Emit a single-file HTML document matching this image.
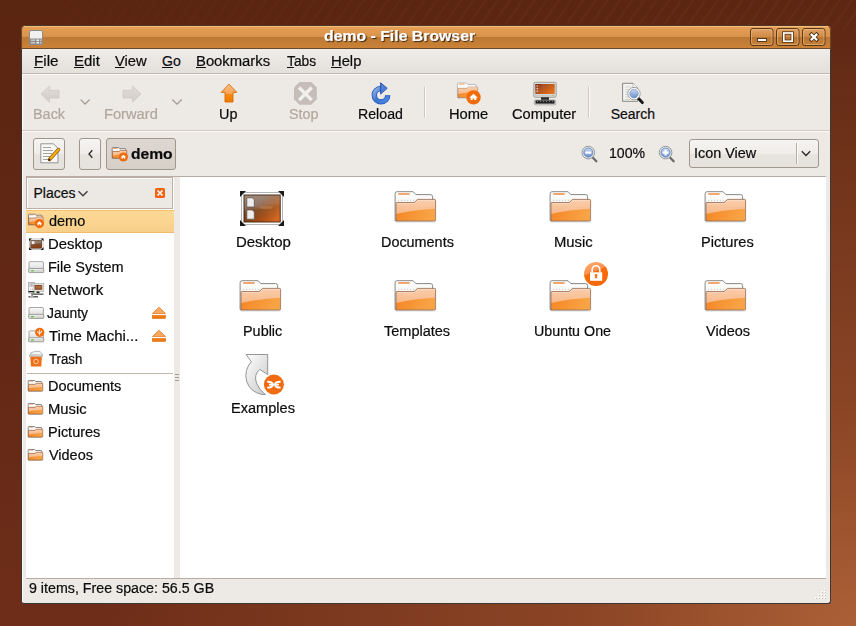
<!DOCTYPE html>
<html><head><meta charset="utf-8"><title>demo - File Browser</title>
<style>
*{margin:0;padding:0;box-sizing:border-box}
html,body{width:856px;height:626px;overflow:hidden}
body{position:relative;font-family:"Liberation Sans",sans-serif;font-size:14px;color:#101010;
background:radial-gradient(ellipse 760px 640px at 100% 100%,rgba(172,96,54,1) 0%,rgba(150,78,42,.75) 35%,rgba(120,58,28,0) 100%),linear-gradient(180deg,#5a2511 0%,#622815 50%,#6e2d19 100%);}
.a{position:absolute}
.t{position:absolute;white-space:nowrap;line-height:14px;font-size:14px;transform-origin:0 0;color:#0c0c0c;-webkit-text-stroke:0.2px currentColor}
.dis{color:#b0a69c}
.bold{font-weight:bold}
.ttl{font-weight:bold;color:#fff;text-shadow:1px 1px 1px #3a2410}
.u{text-decoration:underline;text-underline-offset:1px}
#stripes{position:absolute;left:0;top:0;width:856px;height:40px;
background:repeating-linear-gradient(125deg,rgba(255,150,70,0) 0px,rgba(255,150,70,0) 6px,rgba(255,150,70,.06) 8px,rgba(255,150,70,0) 10px);
-webkit-mask-image:linear-gradient(90deg,rgba(0,0,0,.3) 0%,#000 60%,#000 100%),linear-gradient(180deg,#000 50%,rgba(0,0,0,0) 100%);-webkit-mask-composite:source-in;mask-composite:intersect}
#win{position:absolute;left:21px;top:48px;width:810px;height:556px;background:#edeae6;
border:1px solid #3a3836;border-top:none;border-radius:0 0 3px 3px}
#title{position:absolute;left:21px;top:25px;width:810px;height:24px;
background:linear-gradient(180deg,#4e3626 0px,#4e3626 1px,#f3bd7e 1px,#f3bd7e 2px,#e6a055 2px,#d8924a 12px,#bb7835 12px,#cc8236 23px,#6e4a2c 23px,#6e4a2c 24px);
border-radius:5px 5px 0 0;box-shadow:inset 1px 0 0 #6e4626,inset -1px 0 0 #6e4626}
.btn{position:absolute;border:1px solid #9f968c;border-radius:3px;background:linear-gradient(180deg,#f6f4f2 0%,#efece9 50%,#e7e3de 51%,#e6e2dd 100%)}

</style></head><body>
<div id="stripes"></div>
<div id="win"></div><div id="title"></div>
<div class="a" style="left:22px;top:49px;width:1px;height:553px;background:#fbfaf9"></div>
<div class="a" style="left:22px;top:49px;width:808px;height:24px;background:linear-gradient(180deg,#efedea,#e3dfdb)"></div>
<div class="a" style="left:22px;top:73px;width:808px;height:1px;background:#c3b9b0"></div>
<div class="a" style="left:22px;top:74px;width:808px;height:1px;background:#fbfaf9"></div>
<div class="a" style="left:22px;top:130px;width:808px;height:1px;background:#d2c9c0"></div>
<div class="a" style="left:22px;top:131px;width:808px;height:1px;background:#fbfaf9"></div>
<div class="btn" style="left:33px;top:138px;width:32px;height:32px"></div>
<div class="btn" style="left:79px;top:138px;width:22px;height:32px"></div>
<div class="a" style="left:106px;top:138px;width:70px;height:32px;border:1px solid #9f968c;border-radius:3px;background:linear-gradient(180deg,#ddd7d1,#d6d0c9)"></div>
<div class="btn" style="left:689px;top:139px;width:130px;height:29px"></div>
<div class="a" style="left:26px;top:176px;width:800px;height:1px;background:#b9ada2"></div>
<div class="a" style="left:26px;top:177px;width:148px;height:401px;background:#fff"></div>
<div class="a" style="left:180px;top:177px;width:646px;height:401px;background:#fff"></div>
<div class="a" style="left:26px;top:177px;width:147px;height:32px;background:#ece9e5;border:1px solid #bcb0a6;box-shadow:inset 1px 1px 0 #fcfbfa"></div>
<div class="a" style="left:26px;top:210px;width:148px;height:23px;background:linear-gradient(180deg,#fcd995,#f8cf8a);border-top:1px solid #f3c26e;border-bottom:1px solid #f0bc6c"></div>
<div class="a" style="left:27px;top:373px;width:146px;height:1px;background:#c4b8ac"></div>
<div class="a" style="left:26px;top:578px;width:800px;height:1px;background:#b9ada1"></div>

<svg class="a" style="left:0;top:0" width="856" height="626" viewBox="0 0 856 626"><defs><linearGradient id="gFront" x1="0" y1="0" x2="0" y2="1">
<stop offset="0" stop-color="#fbc69a"/><stop offset="0.45" stop-color="#f8b07a"/><stop offset="0.46" stop-color="#f5953f"/><stop offset="1" stop-color="#f58228"/></linearGradient>
<linearGradient id="gFrontR" x1="0" y1="0" x2="1" y2="0">
<stop offset="0" stop-color="#fff" stop-opacity="0"/><stop offset="1" stop-color="#ffd080" stop-opacity="0.35"/></linearGradient>
<linearGradient id="gBack" x1="0" y1="0" x2="0" y2="1">
<stop offset="0" stop-color="#ffffff"/><stop offset="1" stop-color="#e6e6e2"/></linearGradient>
<linearGradient id="gUp" x1="0" y1="0" x2="0" y2="1">
<stop offset="0" stop-color="#fcc08a"/><stop offset="0.55" stop-color="#f9a050"/><stop offset="0.56" stop-color="#f68a10"/><stop offset="1" stop-color="#f07c00"/></linearGradient>
<linearGradient id="gBlue" x1="0" y1="0" x2="1" y2="1">
<stop offset="0" stop-color="#8fb4ea"/><stop offset="0.5" stop-color="#3d72d0"/><stop offset="1" stop-color="#4a8ae8"/></linearGradient>
<linearGradient id="gScreen" x1="0" y1="0" x2="1" y2="0.6">
<stop offset="0" stop-color="#6e1a08"/><stop offset="0.35" stop-color="#a8502c"/><stop offset="0.7" stop-color="#c86018"/><stop offset="1" stop-color="#e07020"/></linearGradient>
<linearGradient id="gDesk" x1="0.3" y1="0" x2="0.5" y2="1">
<stop offset="0" stop-color="#a08a7c"/><stop offset="0.4" stop-color="#927260"/><stop offset="0.55" stop-color="#7e4c2a"/><stop offset="1" stop-color="#8a3c10"/></linearGradient>
<linearGradient id="gDeskR" x1="0" y1="0.2" x2="1" y2="0.8">
<stop offset="0.35" stop-color="#c86010" stop-opacity="0"/><stop offset="1" stop-color="#f07828" stop-opacity="0.75"/></linearGradient>
<linearGradient id="gGrayArrow" x1="0" y1="0" x2="1" y2="1">
<stop offset="0" stop-color="#ffffff"/><stop offset="1" stop-color="#c8c8c8"/></linearGradient>
<linearGradient id="gDisArrow" x1="0" y1="0" x2="0" y2="1">
<stop offset="0" stop-color="#e2ddd8"/><stop offset="1" stop-color="#d2ccc6"/></linearGradient>
<linearGradient id="gTbtn" x1="0" y1="0" x2="0" y2="1">
<stop offset="0" stop-color="#e2a463"/><stop offset="0.5" stop-color="#d08a45"/><stop offset="0.51" stop-color="#b97634"/><stop offset="1" stop-color="#c88036"/></linearGradient>
<linearGradient id="gDrive" x1="0" y1="0" x2="0" y2="1">
<stop offset="0" stop-color="#fafafa"/><stop offset="1" stop-color="#dcdcdc"/></linearGradient>
<linearGradient id="gEmb" x1="0.1" y1="0.1" x2="0.45" y2="0.95">
<stop offset="0" stop-color="#fba868"/><stop offset="0.42" stop-color="#f99050"/><stop offset="0.43" stop-color="#f86c0a"/><stop offset="1" stop-color="#f56808"/></linearGradient>
<linearGradient id="gZoom" x1="0" y1="0" x2="0" y2="1">
<stop offset="0" stop-color="#c8d8f0"/><stop offset="1" stop-color="#6a90d0"/></linearGradient>
<linearGradient id="gFrontTop" x1="0" y1="0" x2="0" y2="1">
<stop offset="0" stop-color="#fad0b0"/><stop offset="1" stop-color="#f7b888"/></linearGradient>
<linearGradient id="gFrontBot" x1="0" y1="0" x2="1" y2="0.3">
<stop offset="0" stop-color="#f4801e"/><stop offset="1" stop-color="#f8a446"/></linearGradient>
<clipPath id="cFront"><path d="M1.4,12.4 Q1.4,11.4 2.4,11.4 L19.5,11.4 L22.9,8.2 L40,8.2 Q41,8.2 41,9.2 L41,28.8 Q41,29.8 40,29.8 L1.4,29.8 Z"/></clipPath>
<g id="folder">
<path d="M0.5,2.5 Q0.5,0.5 2.5,0.5 L18.5,0.5 L21.2,3.4 L36,3.4 Q38,3.4 38,5.4 L38,29.5 L0.5,29.5 Z" fill="url(#gBack)" stroke="#7d7b78" stroke-width="0.9"/>
<rect x="3.4" y="2" width="11.8" height="1.6" rx="0.8" fill="#f08a40"/>
<g fill="#c4c4bf"><rect x="3.5" y="8.6" width="1" height="1"/><rect x="6.5" y="8.6" width="1" height="1"/><rect x="9.5" y="8.6" width="1" height="1"/><rect x="12.5" y="8.6" width="1" height="1"/><rect x="15.5" y="8.6" width="1" height="1"/><rect x="18.5" y="8.6" width="1" height="1"/></g>
<g clip-path="url(#cFront)">
<rect x="0" y="7" width="42" height="24" fill="url(#gFrontBot)"/>
<path d="M0,7 L42,7 L42,17.6 Q20,18.5 0,23 Z" fill="url(#gFrontTop)"/>
</g>
<path d="M1.4,12.4 Q1.4,11.4 2.4,11.4 L19.5,11.4 L22.9,8.2 L40,8.2 Q41,8.2 41,9.2 L41,28.8 Q41,29.8 40,29.8 L1.4,29.8 Z" fill="none" stroke="#8f6a55" stroke-width="0.8"/>
<path d="M2.4,12.4 L19.9,12.4 L23.3,9.2 L40,9.2" fill="none" stroke="#ffe8d8" stroke-width="0.7" opacity="0.8"/>
<rect x="1" y="30.2" width="40" height="1.6" fill="#000" opacity="0.07"/>
</g>
<g id="folderS">
<path d="M0.5,2.5 Q0.5,0.5 2.5,0.5 L18.5,0.5 L21.2,3.4 L36,3.4 Q38,3.4 38,5.4 L38,29.5 L0.5,29.5 Z" fill="url(#gBack)" stroke="#6a6866" stroke-width="2.2"/>
<rect x="3.4" y="2" width="11.8" height="1.6" rx="0.8" fill="#f08a40"/>
<g fill="#c4c4bf" opacity="0"><rect x="3.5" y="8.6" width="1" height="1"/><rect x="6.5" y="8.6" width="1" height="1"/><rect x="9.5" y="8.6" width="1" height="1"/><rect x="12.5" y="8.6" width="1" height="1"/><rect x="15.5" y="8.6" width="1" height="1"/><rect x="18.5" y="8.6" width="1" height="1"/></g>
<g clip-path="url(#cFront)">
<rect x="0" y="7" width="42" height="24" fill="url(#gFrontBot)"/>
<path d="M0,7 L42,7 L42,17.6 Q20,18.5 0,23 Z" fill="url(#gFrontTop)"/>
</g>
<path d="M1.4,12.4 Q1.4,11.4 2.4,11.4 L19.5,11.4 L22.9,8.2 L40,8.2 Q41,8.2 41,9.2 L41,28.8 Q41,29.8 40,29.8 L1.4,29.8 Z" fill="none" stroke="#9a6040" stroke-width="1.8"/>

<rect x="1" y="30.2" width="40" height="1.6" fill="#000" opacity="0.07"/>
</g></defs><path d="M29.5,44.5 L29.5,32 Q29.5,30.5 31,30.5 L41,30.5 Q42.5,30.5 42.5,32 L42.5,44.5 Z" fill="#f0f0f0" stroke="#8d8a86" stroke-width="1"/>
<rect x="30" y="38.5" width="12" height="6" fill="#8f8d8a"/>
<rect x="31" y="39.5" width="4" height="1.5" fill="#c8c6c3"/><rect x="36.5" y="39.5" width="2.5" height="1.5" fill="#f4f4f4"/><rect x="40" y="39.5" width="1.5" height="1.5" fill="#c8c6c3"/>
<rect x="31" y="42" width="4" height="1.5" fill="#c8c6c3"/><rect x="36.5" y="42" width="2.5" height="1.5" fill="#f4f4f4"/><rect x="40" y="42" width="1.5" height="1.5" fill="#c8c6c3"/>
<rect x="750.5" y="28.5" width="22.5" height="17" rx="2.5" fill="url(#gTbtn)" stroke="#5a3818" stroke-width="1"/>
<rect x="751.5" y="29.5" width="20.5" height="15" rx="1.8" fill="none" stroke="#f0c090" stroke-opacity="0.55" stroke-width="1"/>
<rect x="776.5" y="28.5" width="22.5" height="17" rx="2.5" fill="url(#gTbtn)" stroke="#5a3818" stroke-width="1"/>
<rect x="777.5" y="29.5" width="20.5" height="15" rx="1.8" fill="none" stroke="#f0c090" stroke-opacity="0.55" stroke-width="1"/>
<rect x="802.5" y="28.5" width="22.5" height="17" rx="2.5" fill="url(#gTbtn)" stroke="#5a3818" stroke-width="1"/>
<rect x="803.5" y="29.5" width="20.5" height="15" rx="1.8" fill="none" stroke="#f0c090" stroke-opacity="0.55" stroke-width="1"/>
<rect x="757.5" y="38.5" width="9" height="3" fill="#fff" stroke="#4a2c10" stroke-width="0.9"/>
<rect x="783.8" y="33" width="8.4" height="8.2" fill="none" stroke="#4a2c10" stroke-width="3.2"/>
<rect x="783.8" y="33" width="8.4" height="8.2" fill="none" stroke="#fff" stroke-width="1.7"/>
<path d="M810.1,33.2 L817.9,41 M817.9,33.2 L810.1,41" stroke="#4a2c10" stroke-width="3.8" stroke-linecap="butt"/>
<path d="M810.8,33.9 L817.2,40.3 M817.2,33.9 L810.8,40.3" stroke="#fff" stroke-width="2.2" stroke-linecap="butt"/>
<path d="M41,94 L49.5,86 L49.5,90.3 L59,90.3 L59,98 L49.5,98 L49.5,102.2 Z" fill="url(#gDisArrow)" stroke="#cfc8c1" stroke-width="0.8" stroke-linejoin="round"/>
<path d="M80.6,99.6 L85.1,104 L89.6,99.6" fill="none" stroke="#a39a90" stroke-width="1.3"/>
<path d="M141,94 L132.5,86 L132.5,90.2 L123,90.2 L123,98 L132.5,98 L132.5,102.3 Z" fill="url(#gDisArrow)" stroke="#cfc8c1" stroke-width="0.8" stroke-linejoin="round"/>
<path d="M172.3,99.5 L177,104.1 L181.7,99.5" fill="none" stroke="#a39a90" stroke-width="1.3"/>
<path d="M229,84.2 L236.8,92.4 L233,92.4 L233,102 L225,102 L225,92.4 L221.2,92.4 Z" fill="url(#gUp)" stroke="#d86a00" stroke-width="0.9" stroke-linejoin="round"/>
<path d="M299.5,82 L311.3,82 L316.8,87.5 L316.8,99.3 L311.3,104.8 L299.5,104.8 L294,99.3 L294,87.5 Z" fill="#c5bdb8"/>
<path d="M300.3,88.7 L310.5,98.9 M310.5,88.7 L300.3,98.9" stroke="#f2f0ed" stroke-width="3.4" stroke-linecap="square"/>
<path d="M387.7,95.2 A6.7,6.7 0 1 1 381,88.5" fill="none" stroke="#2450b0" stroke-width="5.4"/>
<path d="M387.7,95.2 A6.7,6.7 0 1 1 381,88.5" fill="none" stroke="url(#gBlue)" stroke-width="3.8"/>
<path d="M380.6,82.8 L387.2,88.3 L380.6,94 Z" fill="#4f80d8" stroke="#1f4aa8" stroke-width="0.9" stroke-linejoin="round"/>
<rect x="424" y="86.5" width="1" height="31" fill="#d0c8c0"/><rect x="425" y="86.5" width="1" height="31" fill="#fbfaf8"/>
<rect x="588" y="86.5" width="1" height="31" fill="#d0c8c0"/><rect x="589" y="86.5" width="1" height="31" fill="#fbfaf8"/>
<use href="#folder" transform="translate(457.20,82.80) scale(0.500)"/>
<circle cx="473.50" cy="97.40" r="7.20" fill="#f26b0a"/>
<path d="M473.50,93.80 L477.80,97.70 L476.30,97.70 L476.30,100.00 L474.30,100.00 L474.30,98.50 L472.70,98.50 L472.70,100.00 L470.70,100.00 L470.70,97.70 L469.20,97.70 Z" fill="#fff"/>
<rect x="533.8" y="82.3" width="22.4" height="15" rx="1.5" fill="#dcdcd8" stroke="#8a8a86" stroke-width="0.8"/>
<rect x="535.3" y="84" width="19.4" height="10" fill="url(#gScreen)"/>
<rect x="536.5" y="85.2" width="1.6" height="1.4" fill="#f0c8a0"/><rect x="536.5" y="87.8" width="1.6" height="1.4" fill="#f0c8a0"/><rect x="536.5" y="90.4" width="1.6" height="1.4" fill="#f0c8a0"/>
<rect x="535" y="94.8" width="20" height="1.8" fill="#c8c8c4"/>
<rect x="552" y="95.2" width="1.3" height="1" fill="#7ad040"/>
<rect x="541" y="97.3" width="8" height="2.8" fill="#2a2a2a"/>
<rect x="534.2" y="100" width="21.6" height="5" rx="1.2" fill="#d0d0cc" stroke="#9a9a96" stroke-width="0.6"/>
<rect x="535.5" y="100.4" width="19" height="3.2" fill="#222"/>
<g fill="#777"><rect x="537" y="101" width="1" height="1"/><rect x="540" y="101" width="1" height="1"/><rect x="543" y="101" width="1" height="1"/><rect x="546" y="101" width="1" height="1"/><rect x="549" y="101" width="1" height="1"/><rect x="552" y="101" width="1" height="1"/></g>
<path d="M622.6,83.3 L633,83.3 L637.6,88 L637.6,101.3 L622.6,101.3 Z" fill="#f4f4f2" stroke="#7a7a78" stroke-width="0.9"/>
<path d="M633,83.3 L633,88 L637.6,88" fill="#fff" stroke="#9a9a98" stroke-width="0.6"/>
<g fill="#c8c8c6"><rect x="625" y="86.5" width="6" height="0.8"/><rect x="625" y="89" width="5" height="0.8"/><rect x="625" y="91.5" width="4" height="0.8"/><rect x="625" y="94" width="4" height="0.8"/><rect x="625" y="96.5" width="4" height="0.8"/><rect x="625" y="99" width="5" height="0.8"/></g>
<path d="M638.5,98.5 L642.3,102.6" stroke="#1a1a1a" stroke-width="3" stroke-linecap="round"/>
<circle cx="634" cy="93.6" r="6.2" fill="#fff" stroke="#8a8a88" stroke-width="0.8"/>
<circle cx="634" cy="93.6" r="4.3" fill="url(#gZoom)" stroke="#5a7aaa" stroke-width="0.5"/>
<path d="M40.8,143.8 L53.5,143.8 L58,148.3 L58,162.8 L40.8,162.8 Z" fill="#f8f8f6" stroke="#8a8a86" stroke-width="0.9"/>
<g fill="#9a9a96"><rect x="43" y="147" width="8" height="0.9"/><rect x="43" y="150" width="10" height="0.9"/><rect x="43" y="153" width="9" height="0.9"/><rect x="43" y="156" width="7" height="0.9"/><rect x="43" y="159" width="5" height="0.9"/></g>
<path d="M49.5,159.5 L58.5,149.5" stroke="#8a5000" stroke-width="3.4" stroke-linecap="round"/>
<path d="M49.5,159.5 L58.5,149.5" stroke="#f8b010" stroke-width="2.2" stroke-linecap="round"/>
<path d="M48.6,160.5 L50,159" stroke="#111" stroke-width="1.4"/>
<path d="M92.3,150.3 L89,154 L92.3,157.7" fill="none" stroke="#2a2a2a" stroke-width="1.3"/>
<use href="#folderS" transform="translate(112.00,147.40) scale(0.360)"/>
<circle cx="123.40" cy="157.00" r="4.60" fill="#f26b0a"/>
<path d="M123.40,154.70 L126.15,157.19 L125.19,157.19 L125.19,158.66 L123.91,158.66 L123.91,157.70 L122.89,157.70 L122.89,158.66 L121.61,158.66 L121.61,157.19 L120.65,157.19 Z" fill="#fff"/>
<path d="M592.7,157.5 L596.3,161.3" stroke="#6a6a6a" stroke-width="2.3" stroke-linecap="round"/>
<circle cx="588.3" cy="152.6" r="6.3" fill="#f0f0f0" stroke="#8a8a8a" stroke-width="0.9"/>
<circle cx="588.3" cy="152.6" r="4.6" fill="url(#gZoom)" stroke="#4f72b0" stroke-width="0.7"/>
<rect x="585.3" y="151.5" width="6" height="2.2" fill="#fff"/>
<path d="M670.0,157.5 L673.6,161.3" stroke="#6a6a6a" stroke-width="2.3" stroke-linecap="round"/>
<circle cx="665.6" cy="152.6" r="6.3" fill="#f0f0f0" stroke="#8a8a8a" stroke-width="0.9"/>
<circle cx="665.6" cy="152.6" r="4.6" fill="url(#gZoom)" stroke="#4f72b0" stroke-width="0.7"/>
<rect x="662.6" y="151.5" width="6" height="2.2" fill="#fff"/>
<rect x="664.5" y="149.6" width="2.2" height="6" fill="#fff"/>
<rect x="796" y="143" width="1" height="21" fill="#b6aea6"/><rect x="797" y="143" width="1" height="21" fill="#fbfaf9"/>
<path d="M801.8,151.3 L806,155.5 L810.2,151.3" fill="none" stroke="#2a2a2a" stroke-width="1.4"/>
<path d="M78.5,191.3 L83,195.8 L87.5,191.3" fill="none" stroke="#3a3a3a" stroke-width="1.3"/>
<rect x="155" y="188" width="10" height="10" rx="1.6" fill="#f26410"/>
<path d="M157.5,190.5 L162.5,195.5 M162.5,190.5 L157.5,195.5" stroke="#fff" stroke-width="1.6"/>
<use href="#folderS" transform="translate(28.30,214.00) scale(0.360)"/>
<circle cx="39.40" cy="223.60" r="4.60" fill="#f26b0a"/>
<path d="M39.40,221.30 L42.15,223.79 L41.19,223.79 L41.19,225.26 L39.91,225.26 L39.91,224.30 L38.89,224.30 L38.89,225.26 L37.61,225.26 L37.61,223.79 L36.65,223.79 Z" fill="#fff"/>
<rect x="29.5" y="239" width="13.5" height="10.5" fill="#fff" stroke="#9a9a9a" stroke-width="0.6"/>
<rect x="30.8" y="240.3" width="10.9" height="7.9" fill="url(#gDesk)" stroke="#3a2212" stroke-width="0.5"/>
<rect x="31.8" y="241.2" width="2.6" height="2.8" fill="#f0f0f0"/>
<path d="M29,238.5 L31.8,238.5 L29,241.3 Z" fill="#111"/><path d="M43.5,238.5 L40.7,238.5 L43.5,241.3 Z" fill="#111"/>
<path d="M29,250 L31.8,250 L29,247.2 Z" fill="#111"/><path d="M43.5,250 L40.7,250 L43.5,247.2 Z" fill="#111"/>
<rect x="29.0" y="261.7" width="14.4" height="7.6" rx="1" fill="url(#gDrive)" stroke="#8f8f8c" stroke-width="0.8"/>
<rect x="28.6" y="268.6" width="15.2" height="4" rx="0.8" fill="#d8d8d5" stroke="#8a8a88" stroke-width="0.8"/>
<rect x="29.7" y="269.1" width="13" height="0.8" fill="#f4f4f4"/>
<rect x="31.2" y="270.2" width="2.5" height="1.2" fill="#50c020"/>
<rect x="28.5" y="282.5" width="6" height="10.5" fill="#f4f4f4" stroke="#9a9a9a" stroke-width="0.7"/>
<rect x="29" y="283" width="5" height="3.8" fill="#b8b8b8"/>
<rect x="29.3" y="283.4" width="1.2" height="1" fill="#fff"/><rect x="32.6" y="283.4" width="1.2" height="1" fill="#fff"/>
<rect x="29.3" y="285.3" width="1.2" height="1" fill="#fff"/><rect x="32.6" y="285.3" width="1.2" height="1" fill="#fff"/>
<rect x="30" y="288.8" width="0.9" height="0.9" fill="#999"/><rect x="32" y="288.8" width="0.9" height="0.9" fill="#999"/>
<rect x="28.5" y="291" width="6" height="1.2" fill="#1a1a1a"/><rect x="32.8" y="292" width="1.2" height="1" fill="#50c020"/>
<rect x="34" y="283.3" width="9.8" height="8.2" fill="#e4e4e0" stroke="#a0a09c" stroke-width="0.6"/>
<rect x="34.6" y="285" width="7.6" height="4.8" fill="#8a4a24"/>
<rect x="35.5" y="286" width="6" height="2.5" fill="#c08050" opacity="0.6"/>
<rect x="36.5" y="291.5" width="3" height="1.6" fill="#222"/>
<rect x="33" y="293.6" width="10.5" height="1" fill="#1a1a1a"/>
<rect x="31.6" y="293" width="0.9" height="3" fill="#222"/>
<rect x="28.5" y="296.2" width="9.5" height="1.2" fill="#333"/>
<rect x="30" y="296.3" width="3.5" height="1" fill="#ccc"/>
<rect x="29.0" y="307.5" width="14.4" height="7.6" rx="1" fill="url(#gDrive)" stroke="#8f8f8c" stroke-width="0.8"/>
<rect x="28.6" y="314.4" width="15.2" height="4" rx="0.8" fill="#d8d8d5" stroke="#8a8a88" stroke-width="0.8"/>
<rect x="29.7" y="314.9" width="13" height="0.8" fill="#f4f4f4"/>
<rect x="31.2" y="316.0" width="2.5" height="1.2" fill="#50c020"/>
<rect x="29.0" y="330.9" width="14.4" height="7.6" rx="1" fill="url(#gDrive)" stroke="#8f8f8c" stroke-width="0.8"/>
<rect x="28.6" y="337.8" width="15.2" height="4" rx="0.8" fill="#d8d8d5" stroke="#8a8a88" stroke-width="0.8"/>
<rect x="29.7" y="338.3" width="13" height="0.8" fill="#f4f4f4"/>
<rect x="31.2" y="339.4" width="2.5" height="1.2" fill="#50c020"/>
<circle cx="39.7" cy="332.3" r="4.6" fill="#f26b0a"/>
<path d="M39.7,329.5 L39.7,335.3 M37.8,331.2 L37.8,332.5 L39.7,333.5 M41.6,330.8 L41.6,332.2 L39.7,333.2" fill="none" stroke="#fff" stroke-width="0.9"/>
<path d="M30.5,355 Q30,351.5 33.5,352 Q35,350.5 37,351.5 Q40,350.5 41.5,353 Q43,354 42,355.5 Z" fill="#f4f4f2" stroke="#9a9a96" stroke-width="0.7"/>
<rect x="29.5" y="355" width="13.2" height="1.8" fill="#e0e0dc" stroke="#999" stroke-width="0.5"/>
<path d="M30.3,356.8 L41.9,356.8 L41.3,366.5 L30.9,366.5 Z" fill="#f06e18"/>
<circle cx="36.1" cy="361.5" r="2.3" fill="none" stroke="#ffd0a8" stroke-width="1"/>
<path d="M159,307.3 L165.6,313.6 L152.4,313.6 Z" fill="#f8a860" stroke="#e07010" stroke-width="0.7" stroke-linejoin="round"/>
<rect x="152.4" y="315.5" width="13.2" height="3" fill="#f07a10" stroke="#d06000" stroke-width="0.5"/>
<path d="M159,330.3 L165.6,336.6 L152.4,336.6 Z" fill="#f8a860" stroke="#e07010" stroke-width="0.7" stroke-linejoin="round"/>
<rect x="152.4" y="338.5" width="13.2" height="3" fill="#f07a10" stroke="#d06000" stroke-width="0.5"/>
<rect x="824" y="588" width="1.5" height="1.5" fill="#fff"/><rect x="825" y="589" width="1" height="1" fill="#c8c0b8"/>
<rect x="824" y="591" width="1.5" height="1.5" fill="#fff"/><rect x="825" y="592" width="1" height="1" fill="#c8c0b8"/>
<rect x="824" y="594" width="1.5" height="1.5" fill="#fff"/><rect x="825" y="595" width="1" height="1" fill="#c8c0b8"/>
<rect x="824" y="597" width="1.5" height="1.5" fill="#fff"/><rect x="825" y="598" width="1" height="1" fill="#c8c0b8"/>
<rect x="821" y="591" width="1.5" height="1.5" fill="#fff"/><rect x="822" y="592" width="1" height="1" fill="#c8c0b8"/>
<rect x="821" y="594" width="1.5" height="1.5" fill="#fff"/><rect x="822" y="595" width="1" height="1" fill="#c8c0b8"/>
<rect x="821" y="597" width="1.5" height="1.5" fill="#fff"/><rect x="822" y="598" width="1" height="1" fill="#c8c0b8"/>
<rect x="818" y="594" width="1.5" height="1.5" fill="#fff"/><rect x="819" y="595" width="1" height="1" fill="#c8c0b8"/>
<rect x="818" y="597" width="1.5" height="1.5" fill="#fff"/><rect x="819" y="598" width="1" height="1" fill="#c8c0b8"/>
<rect x="815" y="597" width="1.5" height="1.5" fill="#fff"/><rect x="816" y="598" width="1" height="1" fill="#c8c0b8"/>
<rect x="175" y="374" width="4" height="1" fill="#a89c90"/>
<rect x="175" y="377" width="4" height="1" fill="#a89c90"/>
<rect x="175" y="380" width="4" height="1" fill="#a89c90"/>
<use href="#folderS" transform="translate(28.00,380.30) scale(0.360)"/>
<use href="#folderS" transform="translate(28.00,403.30) scale(0.360)"/>
<use href="#folderS" transform="translate(28.00,426.30) scale(0.360)"/>
<use href="#folderS" transform="translate(28.00,449.30) scale(0.360)"/>
<rect x="241.5" y="192.5" width="41" height="32" fill="#fff" stroke="#b4b4b4" stroke-width="1"/>
<rect x="244" y="195" width="36.2" height="27" fill="url(#gDesk)" stroke="#3a2212" stroke-width="0.9"/>
<rect x="244.5" y="195.5" width="35.2" height="26" fill="url(#gDeskR)"/>
<ellipse cx="266" cy="207.5" rx="7" ry="1.6" fill="#f0b070" opacity="0.25"/>
<path d="M246.8,197.8 L252.3,197.8 L254.3,199.8 L254.3,207 L246.8,207 Z" fill="#ededed" stroke="#5a4a40" stroke-width="0.7"/>
<path d="M246.8,209.9 L252.3,209.9 L254.3,211.9 L254.3,219.2 L246.8,219.2 Z" fill="#ededed" stroke="#5a4a40" stroke-width="0.7"/>
<path d="M240,191 L246,191 L240,197 Z" fill="#1a1a1a"/>
<path d="M284,191 L278,191 L284,197 Z" fill="#1a1a1a"/>
<path d="M240,226 L246,226 L240,220 Z" fill="#1a1a1a"/>
<path d="M284,226 L278,226 L284,220 Z" fill="#1a1a1a"/>

<use href="#folder" transform="translate(394.60,191.20) scale(1.000)"/>
<use href="#folder" transform="translate(549.60,191.20) scale(1.000)"/>
<use href="#folder" transform="translate(704.60,191.20) scale(1.000)"/>
<use href="#folder" transform="translate(239.60,280.20) scale(1.000)"/>
<use href="#folder" transform="translate(394.60,280.20) scale(1.000)"/>
<use href="#folder" transform="translate(549.60,280.20) scale(1.000)"/>
<use href="#folder" transform="translate(704.60,280.20) scale(1.000)"/>
<circle cx="596" cy="274.1" r="12" fill="url(#gEmb)"/>
<path d="M592.2,272.5 L592.2,269.5 A3.8,3.8 0 0 1 599.8,269.5 L599.8,272.5" fill="none" stroke="#fff" stroke-width="1.6"/>
<rect x="590" y="272.3" width="12.2" height="8.5" fill="#fff"/>
<circle cx="596.1" cy="275.2" r="1.3" fill="#f86c0a"/><path d="M595.5,275.5 L594.8,278.3 L597.4,278.3 L596.7,275.5 Z" fill="#f86c0a"/>
<path d="M246.1,354.5 L267.7,354.5 L267.7,374.6 L259.8,369.4 Q253.5,375 256.5,383 Q259,390 265.4,394.5 L262,394.5 Q250,392 246.5,381 Q244,370 251.3,361.7 Z" fill="url(#gGrayArrow)" stroke="#8a8a8a" stroke-width="0.9" stroke-linejoin="round"/>
<circle cx="273.9" cy="384.5" r="10" fill="#f06a10"/>
<path d="M267.2,381.8 Q272.6,381.6 272.8,384.6 Q272.6,387.6 267.2,387.6 M269,384.6 L279,384.6 M280.6,381.8 Q275.2,381.6 275,384.6 Q275.2,387.6 280.6,387.6" fill="none" stroke="#fff" stroke-width="1.9"/></svg>
<div class="t ttl" id="ttext" style="left:323.70px;top:29.20px;transform:scaleX(1.1291)">demo - File Browser</div>
<div class="t" id="m_file" style="left:34.41px;top:53.80px;transform:scaleX(1.0857)"><span class="u">F</span>ile</div>
<div class="t" id="m_edit" style="left:73.53px;top:53.80px;transform:scaleX(1.0696)"><span class="u">E</span>dit</div>
<div class="t" id="m_view" style="left:115.00px;top:53.80px;transform:scaleX(1.0533)"><span class="u">V</span>iew</div>
<div class="t" id="m_go" style="left:162.00px;top:53.80px"><span class="u">G</span>o</div>
<div class="t" id="m_book" style="left:196.24px;top:53.80px;transform:scaleX(1.0580)"><span class="u">B</span>ookmarks</div>
<div class="t" id="m_tabs" style="left:287.10px;top:53.80px;transform:scaleX(0.9828)"><span class="u">T</span>abs</div>
<div class="t" id="m_help" style="left:331.35px;top:53.80px;transform:scaleX(1.0536)"><span class="u">H</span>elp</div>
<div class="t dis" id="tb_back" style="left:33.47px;top:107.00px;transform:scaleX(1.0300)">Back</div>
<div class="t dis" id="tb_fwd" style="left:104.45px;top:107.00px;transform:scaleX(1.0480)">Forward</div>
<div class="t" id="tb_up" style="left:219.37px;top:107.00px;transform:scaleX(1.0294)">Up</div>
<div class="t dis" id="tb_stop" style="left:289.28px;top:107.00px;transform:scaleX(1.0214)">Stop</div>
<div class="t" id="tb_reload" style="left:358.49px;top:107.00px;transform:scaleX(1.0116)">Reload</div>
<div class="t" id="tb_home" style="left:448.75px;top:107.00px;transform:scaleX(1.0500)">Home</div>
<div class="t" id="tb_comp" style="left:512.26px;top:107.00px;transform:scaleX(1.0443)">Computer</div>
<div class="t" id="tb_search" style="left:610.70px;top:107.00px">Search</div>
<div class="t bold" id="loc_demo" style="left:130.80px;top:146.60px;transform:scaleX(1.1135)">demo</div>
<div class="t" id="zoom" style="left:608.69px;top:146.00px;transform:scaleX(1.0086)">100%</div>
<div class="t" id="combo" style="left:694.37px;top:146.00px;transform:scaleX(1.0283)">Icon View</div>
<div class="t" id="places" style="left:33.50px;top:185.60px">Places</div>
<div class="t" id="s_demo" style="left:48.70px;top:213.90px;transform:scaleX(1.0343)">demo</div>
<div class="t" id="s_desk" style="left:47.64px;top:236.80px;transform:scaleX(1.0620)">Desktop</div>
<div class="t" id="s_fs" style="left:47.67px;top:259.80px;transform:scaleX(1.0347)">File System</div>
<div class="t" id="s_net" style="left:47.63px;top:282.60px;transform:scaleX(1.0740)">Network</div>
<div class="t" id="s_jaunty" style="left:47.30px;top:305.70px;transform:scaleX(0.9927)">Jaunty</div>
<div class="t" id="s_tm" style="left:48.60px;top:328.70px;transform:scaleX(1.0695)">Time Machi...</div>
<div class="t" id="s_trash" style="left:48.60px;top:351.70px;transform:scaleX(0.9457)">Trash</div>
<div class="t" id="s_docs" style="left:47.86px;top:378.80px;transform:scaleX(1.0357)">Documents</div>
<div class="t" id="s_music" style="left:47.84px;top:401.80px;transform:scaleX(1.0571)">Music</div>
<div class="t" id="s_pics" style="left:47.87px;top:424.80px;transform:scaleX(1.0347)">Pictures</div>
<div class="t" id="s_vids" style="left:48.50px;top:447.80px;transform:scaleX(1.0310)">Videos</div>
<div class="t" id="c_desk" style="left:235.53px;top:235.00px;transform:scaleX(1.0680)">Desktop</div>
<div class="t" id="c_docs" style="left:380.97px;top:235.00px;transform:scaleX(1.0286)">Documents</div>
<div class="t" id="c_music" style="left:553.74px;top:235.00px;transform:scaleX(1.0600)">Music</div>
<div class="t" id="c_pics" style="left:701.26px;top:235.00px;transform:scaleX(1.0429)">Pictures</div>
<div class="t" id="c_public" style="left:242.77px;top:323.90px;transform:scaleX(1.0297)">Public</div>
<div class="t" id="c_templ" style="left:384.20px;top:323.90px;transform:scaleX(1.0359)">Templates</div>
<div class="t" id="c_u1" style="left:533.98px;top:323.90px;transform:scaleX(1.0203)">Ubuntu One</div>
<div class="t" id="c_vids" style="left:706.20px;top:323.90px;transform:scaleX(1.0357)">Videos</div>
<div class="t" id="c_examples" style="left:230.76px;top:401.10px;transform:scaleX(1.0400)">Examples</div>
<div class="t" id="status" style="left:28.50px;top:580.90px;transform:scaleX(1.0170)">9 items, Free space: 56.5 GB</div>
</body></html>
